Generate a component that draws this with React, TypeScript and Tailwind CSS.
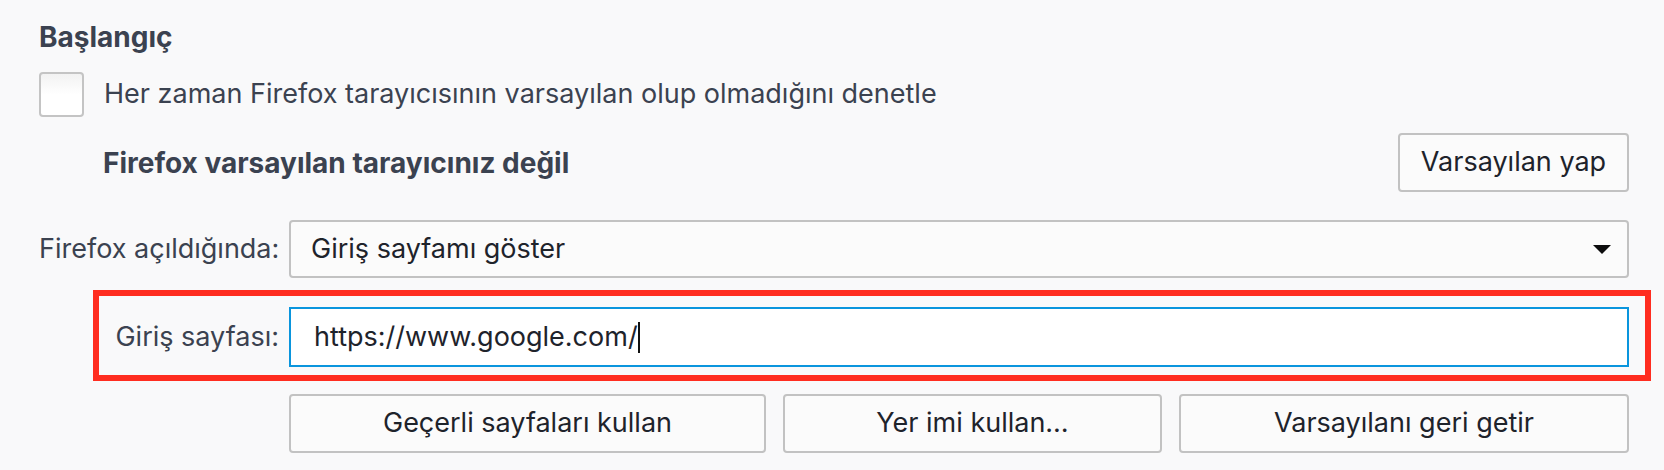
const labelText = 'text-[#3b4250]';

function Button({ label, className = '' }: { label: string; className?: string }) {
  return (
    <button
      type="button"
      className={`h-[59px] rounded-[4px] border-2 border-[#c2c2c2] bg-[#fbfbfb] text-[27px] text-[#1e232b] ${className}`}
    >
      {label}
    </button>
  );
}

export default function App() {
  return (
    <div
      className="w-full h-[470px] bg-[#f9f9fa] pl-[39px] pr-[35px] pt-[21px] overflow-hidden"
      style={{ fontFamily: 'Inter, "Noto Sans", sans-serif' }}
    >
      {/* Heading */}
      <h2 className={`text-[28px] leading-[32px] font-bold ${labelText}`}>Başlangıç</h2>

      {/* Default browser check */}
      <label className="mt-[19px] flex items-center h-[45px]">
        <span className="w-[45px] h-[45px] rounded-[4px] border-2 border-[#c4c4c4] bg-linear-to-b from-[#f2f2f2] via-white to-white" />
        <span className={`ml-[20px] text-[27px] ${labelText}`}>
          Her zaman Firefox tarayıcısının varsayılan olup olmadığını denetle
        </span>
      </label>

      <div className="mt-[16px] flex items-center justify-between">
        <span className={`ml-[64px] text-[28px] font-bold ${labelText}`}>
          Firefox varsayılan tarayıcınız değil
        </span>
        <Button label="Varsayılan yap" className="w-[231px] h-[58px]" />
      </div>

      {/* On startup */}
      <div className="mt-[28px] flex items-center">
        <span className={`w-[250px] pr-[10px] text-right whitespace-nowrap text-[27px] ${labelText}`}>
          Firefox açıldığında:
        </span>
        <div className="flex-1 h-[58px] rounded-[4px] border-2 border-[#c2c2c2] bg-[#fbfbfb] flex items-center justify-between pl-[20px] pr-[16px]">
          <span className="text-[27px] text-[#1e232b]">Giriş sayfamı göster</span>
          <svg width="18" height="9" viewBox="0 0 18 9">
            <path d="M0 0h18L9 9z" fill="#0c0c0d" />
          </svg>
        </div>
      </div>

      {/* Home page (highlighted) */}
      <div className="mt-[12px] ml-[54px] -mr-[22px] border-[6px] border-[#ff2d20] flex items-center pt-[11px] pb-[8px] pr-[16px]">
        <span className={`w-[190px] pr-[10px] text-right whitespace-nowrap text-[27px] ${labelText}`}>
          Giriş sayfası:
        </span>
        <div className="flex-1 h-[60px] border-2 border-[#0a95dd] bg-white flex items-center pl-[23px]">
          <span className="text-[27px] text-[#1e232b]">https://www.google.com/</span>
          <span className="w-[2px] h-[31px] bg-[#111]" />
        </div>
      </div>

      <div className="mt-[13px] ml-[250px] flex gap-[17px]">
        <Button label="Geçerli sayfaları kullan" className="w-[477px]" />
        <Button label="Yer imi kullan…" className="w-[379px]" />
        <Button label="Varsayılanı geri getir" className="w-[450px]" />
      </div>
    </div>
  );
}
